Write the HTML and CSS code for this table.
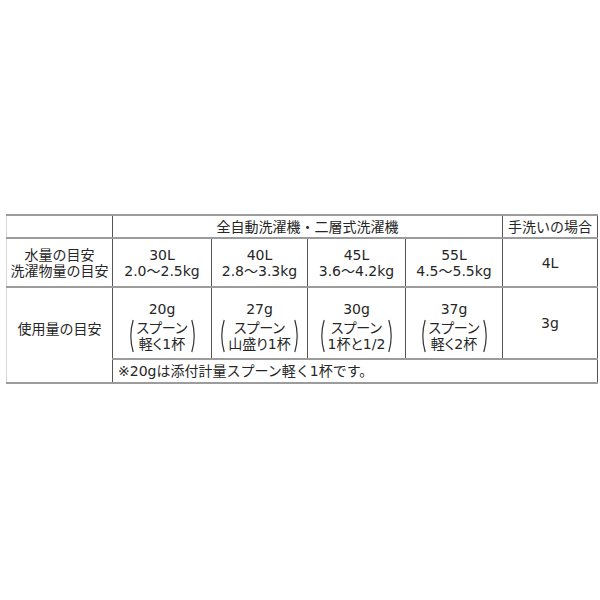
FILE: index.html
```html
<!DOCTYPE html>
<html lang="ja">
<head>
<meta charset="utf-8">
<title>使用量の目安</title>
<link rel="stylesheet" href="styles.css">
</head>
<body>
<table class="usage">
  <colgroup>
    <col class="w-label">
    <col class="w-a">
    <col class="w-b">
    <col class="w-c">
    <col class="w-d">
    <col class="w-e">
  </colgroup>
  <tr class="r-head">
    <td class="first"></td>
    <td colspan="4">全自動洗濯機・二層式洗濯機</td>
    <td class="last">手洗いの場合</td>
  </tr>
  <tr class="r-water">
    <td class="first"><div>水量の目安</div><div>洗濯物量の目安</div></td>
    <td><div>30L</div><div>2.0～2.5kg</div></td>
    <td><div>40L</div><div>2.8～3.3kg</div></td>
    <td><div>45L</div><div>3.6～4.2kg</div></td>
    <td><div>55L</div><div>4.5～5.5kg</div></td>
    <td class="last">4L</td>
  </tr>
  <tr class="r-dose">
    <td class="first" rowspan="2"><div class="dose-label">使用量の目安</div></td>
    <td>
      <div class="amt">20g</div>
      <div class="pw">
        <svg class="paren" viewBox="0 0 6 34" width="6" height="34"><path d="M5.2 1 Q0.4 17 5.2 33"/></svg>
        <div class="ptext"><div>スプーン</div><div>軽く1杯</div></div>
        <svg class="paren" viewBox="0 0 6 34" width="6" height="34"><path d="M0.8 1 Q5.6 17 0.8 33"/></svg>
      </div>
    </td>
    <td>
      <div class="amt">27g</div>
      <div class="pw">
        <svg class="paren" viewBox="0 0 6 34" width="6" height="34"><path d="M5.2 1 Q0.4 17 5.2 33"/></svg>
        <div class="ptext"><div>スプーン</div><div>山盛り1杯</div></div>
        <svg class="paren" viewBox="0 0 6 34" width="6" height="34"><path d="M0.8 1 Q5.6 17 0.8 33"/></svg>
      </div>
    </td>
    <td>
      <div class="amt">30g</div>
      <div class="pw">
        <svg class="paren" viewBox="0 0 6 34" width="6" height="34"><path d="M5.2 1 Q0.4 17 5.2 33"/></svg>
        <div class="ptext"><div>スプーン</div><div>1杯と1/2</div></div>
        <svg class="paren" viewBox="0 0 6 34" width="6" height="34"><path d="M0.8 1 Q5.6 17 0.8 33"/></svg>
      </div>
    </td>
    <td>
      <div class="amt">37g</div>
      <div class="pw">
        <svg class="paren" viewBox="0 0 6 34" width="6" height="34"><path d="M5.2 1 Q0.4 17 5.2 33"/></svg>
        <div class="ptext"><div>スプーン</div><div>軽く2杯</div></div>
        <svg class="paren" viewBox="0 0 6 34" width="6" height="34"><path d="M0.8 1 Q5.6 17 0.8 33"/></svg>
      </div>
    </td>
    <td class="last">3g</td>
  </tr>
  <tr class="r-note">
    <td class="note" colspan="5">※20gは添付計量スプーン軽く1杯です。</td>
  </tr>
</table>
</body>
</html>
```

FILE: styles.css
```css
html, body {
  margin: 0;
  padding: 0;
  background: #ffffff;
}

body {
  font-family: "DejaVu Sans", "Noto Sans CJK JP", sans-serif;
  color: #262626;
  font-size: 14px;
}

.usage {
  margin: 214px 0 0 6px;
  border-collapse: collapse;
  table-layout: fixed;
  width: 591px;
}

.w-label { width: 106px; }
.w-a { width: 99px; }
.w-b { width: 96px; }
.w-c { width: 98px; }
.w-d { width: 97px; }
.w-e { width: 95px; }

.usage td {
  border-top: 2px solid #9c9c9c;
  border-bottom: 2px solid #9c9c9c;
  border-left: 1px solid #555555;
  border-right: 1px solid #555555;
  padding: 0;
  text-align: center;
  vertical-align: middle;
  line-height: 16px;
  white-space: nowrap;
}

.usage td.first {
  border-left: 1px solid #d8d8d8;
}

.usage td.last {
  border-right: 1px solid #555555;
}

.r-head td { height: 21px; }
.r-water td { height: 47px; }
.r-dose td { height: 70px; }
.r-note td { height: 22px; }

.dose-label {
  margin-bottom: 12px;
}

.amt {
  line-height: 17px;
  margin-top: 8px;
  margin-bottom: 1px;
}

.pw {
  display: flex;
  justify-content: center;
  align-items: center;
  gap: 3px;
}

.ptext {
  line-height: 16px;
  font-feature-settings: "palt";
}

.paren {
  display: block;
  flex: none;
}

.paren path {
  fill: none;
  stroke: #333333;
  stroke-width: 1.2;
}

.usage td.note {
  text-align: left;
  padding-left: 5px;
}
```
